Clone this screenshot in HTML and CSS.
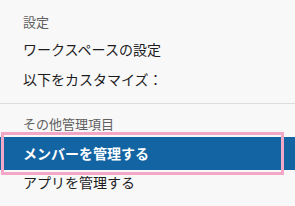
FILE: index.html
```html
<!DOCTYPE html>
<html lang="ja">
<head>
    <meta charset="UTF-8">
    <meta name="viewport" content="width=device-width, initial-scale=1.0">
    <title>メニュー</title>
    <link rel="stylesheet" href="styles.css">
</head>
<body>

    <div class="menu">
        <div class="menu-section">
            <div class="menu-label">設定</div>
            <div class="menu-item">ワークスペースの設定</div>
            <div class="menu-item">以下をカスタマイズ：</div>
        </div>

        <div class="menu-divider"></div>

        <div class="menu-section">
            <div class="menu-label label-other">その他管理項目</div>
            <div class="menu-item active">メンバーを管理する</div>
            <div class="menu-item item-last">アプリを管理する</div>
        </div>

        <!-- annotation box around the highlighted item -->
        <div class="highlight-box"></div>
    </div>

</body>
</html>
```

FILE: styles.css
```css
body {
    margin: 0;
    background-color: #f8f8f8;
    font-family: Lato, "Noto Sans CJK JP", sans-serif;
    color: #1d1c1d;
}

.menu {
    position: relative;
    height: 206px;
    padding-top: 9px;
    box-sizing: border-box;
}

.menu-label {
    font-size: 13px;
    line-height: 26px;
    padding-left: 23px;
    color: #616061;
}

.menu-item {
    font-size: 14px;
    line-height: 30px;
    padding-left: 23px;
}

.menu-divider {
    height: 1px;
    margin: 8px 0;
    background-color: #dddddd;
}

.label-other {
    line-height: 24px;
    padding-bottom: 1px;
}

.menu-item.active {
    line-height: 33px;
    background-color: #1264a3;
    color: #ffffff;
    font-weight: bold;
}

.item-last {
    line-height: 26px;
}

.highlight-box {
    position: absolute;
    left: 1px;
    top: 132px;
    width: 283px;
    height: 43px;
    box-sizing: border-box;
    border: 3px solid #f3a7c7;
}
```
